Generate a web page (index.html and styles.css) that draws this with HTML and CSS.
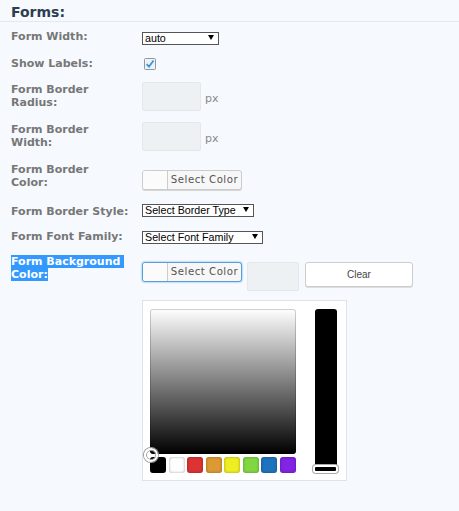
FILE: index.html
```html
<!DOCTYPE html>
<html>
<head>
<meta charset="utf-8">
<link rel="stylesheet" href="styles.css">
</head>
<body>
<div class="page">
  <h2 class="title">Forms:</h2>
  <div class="rows">
    <div class="row mb12">
      <div class="label">Form Width:</div>
      <div class="ctl mt2">
        <span class="sel w77"><select><option>auto</option></select><span class="arrow"></span></span>
      </div>
    </div>
    <div class="row mb12">
      <div class="label">Show Labels:</div>
      <div class="ctl mt1">
        <svg class="check" width="12" height="12" viewBox="0 0 12 12">
          <rect x="0.5" y="0.5" width="11" height="11" rx="1" fill="#eef2f6" stroke="#8a9aa8"/>
          <path d="M2.6 6.2 L5 8.6 L9.6 2.6" fill="none" stroke="#3b94d3" stroke-width="1.7"/>
        </svg>
      </div>
    </div>
    <div class="row mb11">
      <div class="label pt1">Form Border<br>Radius:</div>
      <div class="ctl inline">
        <input class="num" type="text"><span class="px">px</span>
      </div>
    </div>
    <div class="row mb12">
      <div class="label pt1">Form Border<br>Width:</div>
      <div class="ctl inline">
        <input class="num" type="text"><span class="px">px</span>
      </div>
    </div>
    <div class="row mb14">
      <div class="label">Form Border<br>Color:</div>
      <div class="ctl mt7">
        <button class="colorbtn"><span class="swatch"></span><span class="cbtext">Select Color</span></button>
      </div>
    </div>
    <div class="row mb12">
      <div class="label pt1">Form Border Style:</div>
      <div class="ctl">
        <span class="sel w112"><select><option>Select Border Type</option></select><span class="arrow"></span></span>
      </div>
    </div>
    <div class="row mb11">
      <div class="label">Form Font Family:</div>
      <div class="ctl mt1">
        <span class="sel w121"><select><option>Select Font Family</option></select><span class="arrow"></span></span>
      </div>
    </div>
    <div class="row">
      <div class="label"><span class="hl">Form Background&nbsp;</span><br><span class="hl">Color:</span></div>
      <div class="ctl col mt7">
        <div class="line">
          <button class="colorbtn focus"><span class="swatch"></span><span class="cbtext">Select Color</span></button>
          <input class="num small" type="text">
          <button class="clear">Clear</button>
        </div>
        <div class="picker">
          <div class="left">
            <div class="square">
              <span class="marker"></span>
            </div>
            <div class="palette">
              <span class="sw" style="background:#000000"></span>
              <span class="sw" style="background:#ffffff"></span>
              <span class="sw" style="background:#dd3333"></span>
              <span class="sw" style="background:#dd9933"></span>
              <span class="sw" style="background:#eeee22"></span>
              <span class="sw" style="background:#81d742"></span>
              <span class="sw" style="background:#1e73be"></span>
              <span class="sw" style="background:#8224e3"></span>
            </div>
          </div>
          <div class="slider"><span class="handle"></span></div>
        </div>
      </div>
    </div>
  </div>
</div>
</body>
</html>
```

FILE: styles.css
```css
html, body {
  margin: 0;
  padding: 0;
  background: #f6faff;
}
body {
  font-family: "DejaVu Sans", Verdana, sans-serif;
  width: 459px;
  height: 511px;
  overflow: hidden;
}
.title {
  margin: 0;
  padding: 4px 11px 0;
  font-size: 14px;
  line-height: 17px;
  font-weight: bold;
  color: #2c3e50;
  border-bottom: 1px solid #e3e9ee;
}
.rows {
  padding-left: 11px;
  margin-top: 8px;
}
.row {
  display: flex;
  align-items: flex-start;
}
.mb11 { margin-bottom: 11px; }
.mb12 { margin-bottom: 12px; }
.mb14 { margin-bottom: 14px; }
.mt1 { margin-top: 1px; }
.mt2 { margin-top: 2px; }
.mt7 { margin-top: 7px; }
.pt1 { padding-top: 1px; }
.label {
  width: 124px;
  padding-right: 7px;
  flex: none;
  white-space: nowrap;
  font-size: 11px;
  line-height: 13px;
  font-weight: bold;
  color: #777;
}
.hl {
  background: #3399ff;
  color: #fff;
}
.ctl {
  display: flex;
}
.ctl.inline {
  align-items: center;
}
.ctl.col {
  flex-direction: column;
  align-items: flex-start;
}
.sel {
  position: relative;
  display: block;
  height: 13px;
}
.sel select {
  -webkit-appearance: none;
  appearance: none;
  box-sizing: border-box;
  display: block;
  width: 100%;
  height: 13px;
  margin: 0;
  padding: 0 0 0 2px;
  border: 1px solid #555;
  border-radius: 0;
  background: #fff;
  color: #000;
  font-family: "Liberation Sans", Arial, sans-serif;
  font-size: 10.7px;
  line-height: 11px;
}
.w77 { width: 77px; }
.w112 { width: 112px; }
.w121 { width: 121px; }
.arrow {
  position: absolute;
  right: 5px;
  top: 3px;
  width: 0;
  height: 0;
  border-left: 3px solid transparent;
  border-right: 3px solid transparent;
  border-top: 5px solid #000;
  pointer-events: none;
}
.check {
  display: block;
  margin-left: 2px;
}
.num {
  box-sizing: border-box;
  width: 59px;
  height: 29px;
  margin: 0;
  padding: 0;
  border: 1px solid #e4e8eb;
  border-radius: 2px;
  background: #eef1f4;
}
.num.small {
  width: 52px;
  margin-left: 5px;
}
.px {
  margin-left: 4px;
  font-size: 11px;
  color: #888;
  padding-top: 3px;
}
.colorbtn {
  box-sizing: border-box;
  display: flex;
  width: 100px;
  height: 20px;
  margin: 0;
  padding: 0;
  border: 1px solid #ccc;
  border-radius: 3px;
  background: #f7f7f7;
  box-shadow: 0 1px 0 #d5d5d5;
  overflow: hidden;
  cursor: pointer;
}
.colorbtn.focus {
  border-color: #5b9dd9;
  box-shadow: 0 0 2px rgba(30, 140, 190, 0.8);
}
.swatch {
  width: 24px;
  height: 100%;
  background: #fbfbfb;
  border-right: 1px solid #ccc;
  flex: none;
}
.cbtext {
  flex: 1;
  text-align: center;
  font-family: "DejaVu Sans", Verdana, sans-serif;
  font-size: 10.2px;
  line-height: 18px;
  color: #555;
  letter-spacing: 0.5px;
}
.line {
  display: flex;
  align-items: flex-start;
}
.clear {
  box-sizing: border-box;
  width: 108px;
  height: 25px;
  margin: 0 0 0 6px;
  padding: 0;
  border: 1px solid #ccc;
  border-radius: 3px;
  background: #fff;
  box-shadow: 0 1px 0 #ddd;
  font-family: "Liberation Sans", Arial, sans-serif;
  font-size: 10px;
  color: #444;
}
.picker {
  box-sizing: border-box;
  display: flex;
  align-items: flex-start;
  width: 205px;
  height: 181px;
  margin-top: 9px;
  padding: 8px 7px 7px;
  border: 1px solid #dde3e8;
  background: #fff;
}
.left {
  width: 146px;
  flex: none;
}
.square {
  position: relative;
  height: 145px;
  border-radius: 3px;
  background: linear-gradient(#ffffff, #000000);
  box-shadow: inset 0 0 0 1px rgba(0, 0, 0, 0.18);
}
.marker {
  position: absolute;
  left: -6px;
  top: 139px;
  box-sizing: border-box;
  width: 14px;
  height: 14px;
  border-radius: 50%;
  border: 2px solid #fff;
  box-shadow: 0 0 0 1px #999, inset 0 0 0 1px #999;
}
.palette {
  display: flex;
  justify-content: space-between;
  margin-top: 3px;
}
.sw {
  width: 16px;
  height: 16px;
  border-radius: 3px;
  box-shadow: inset 0 0 3px rgba(0, 0, 0, 0.35);
}
.slider {
  position: relative;
  width: 22px;
  height: 161px;
  margin-left: 19px;
  background: #000;
  border-radius: 3px;
  flex: none;
}
.handle {
  position: absolute;
  left: -2px;
  bottom: -3px;
  box-sizing: border-box;
  width: 25px;
  height: 8px;
  background: #000;
  border: 2px solid #fff;
  border-radius: 3px;
  box-shadow: 0 0 0 1px #aaa;
}
```
